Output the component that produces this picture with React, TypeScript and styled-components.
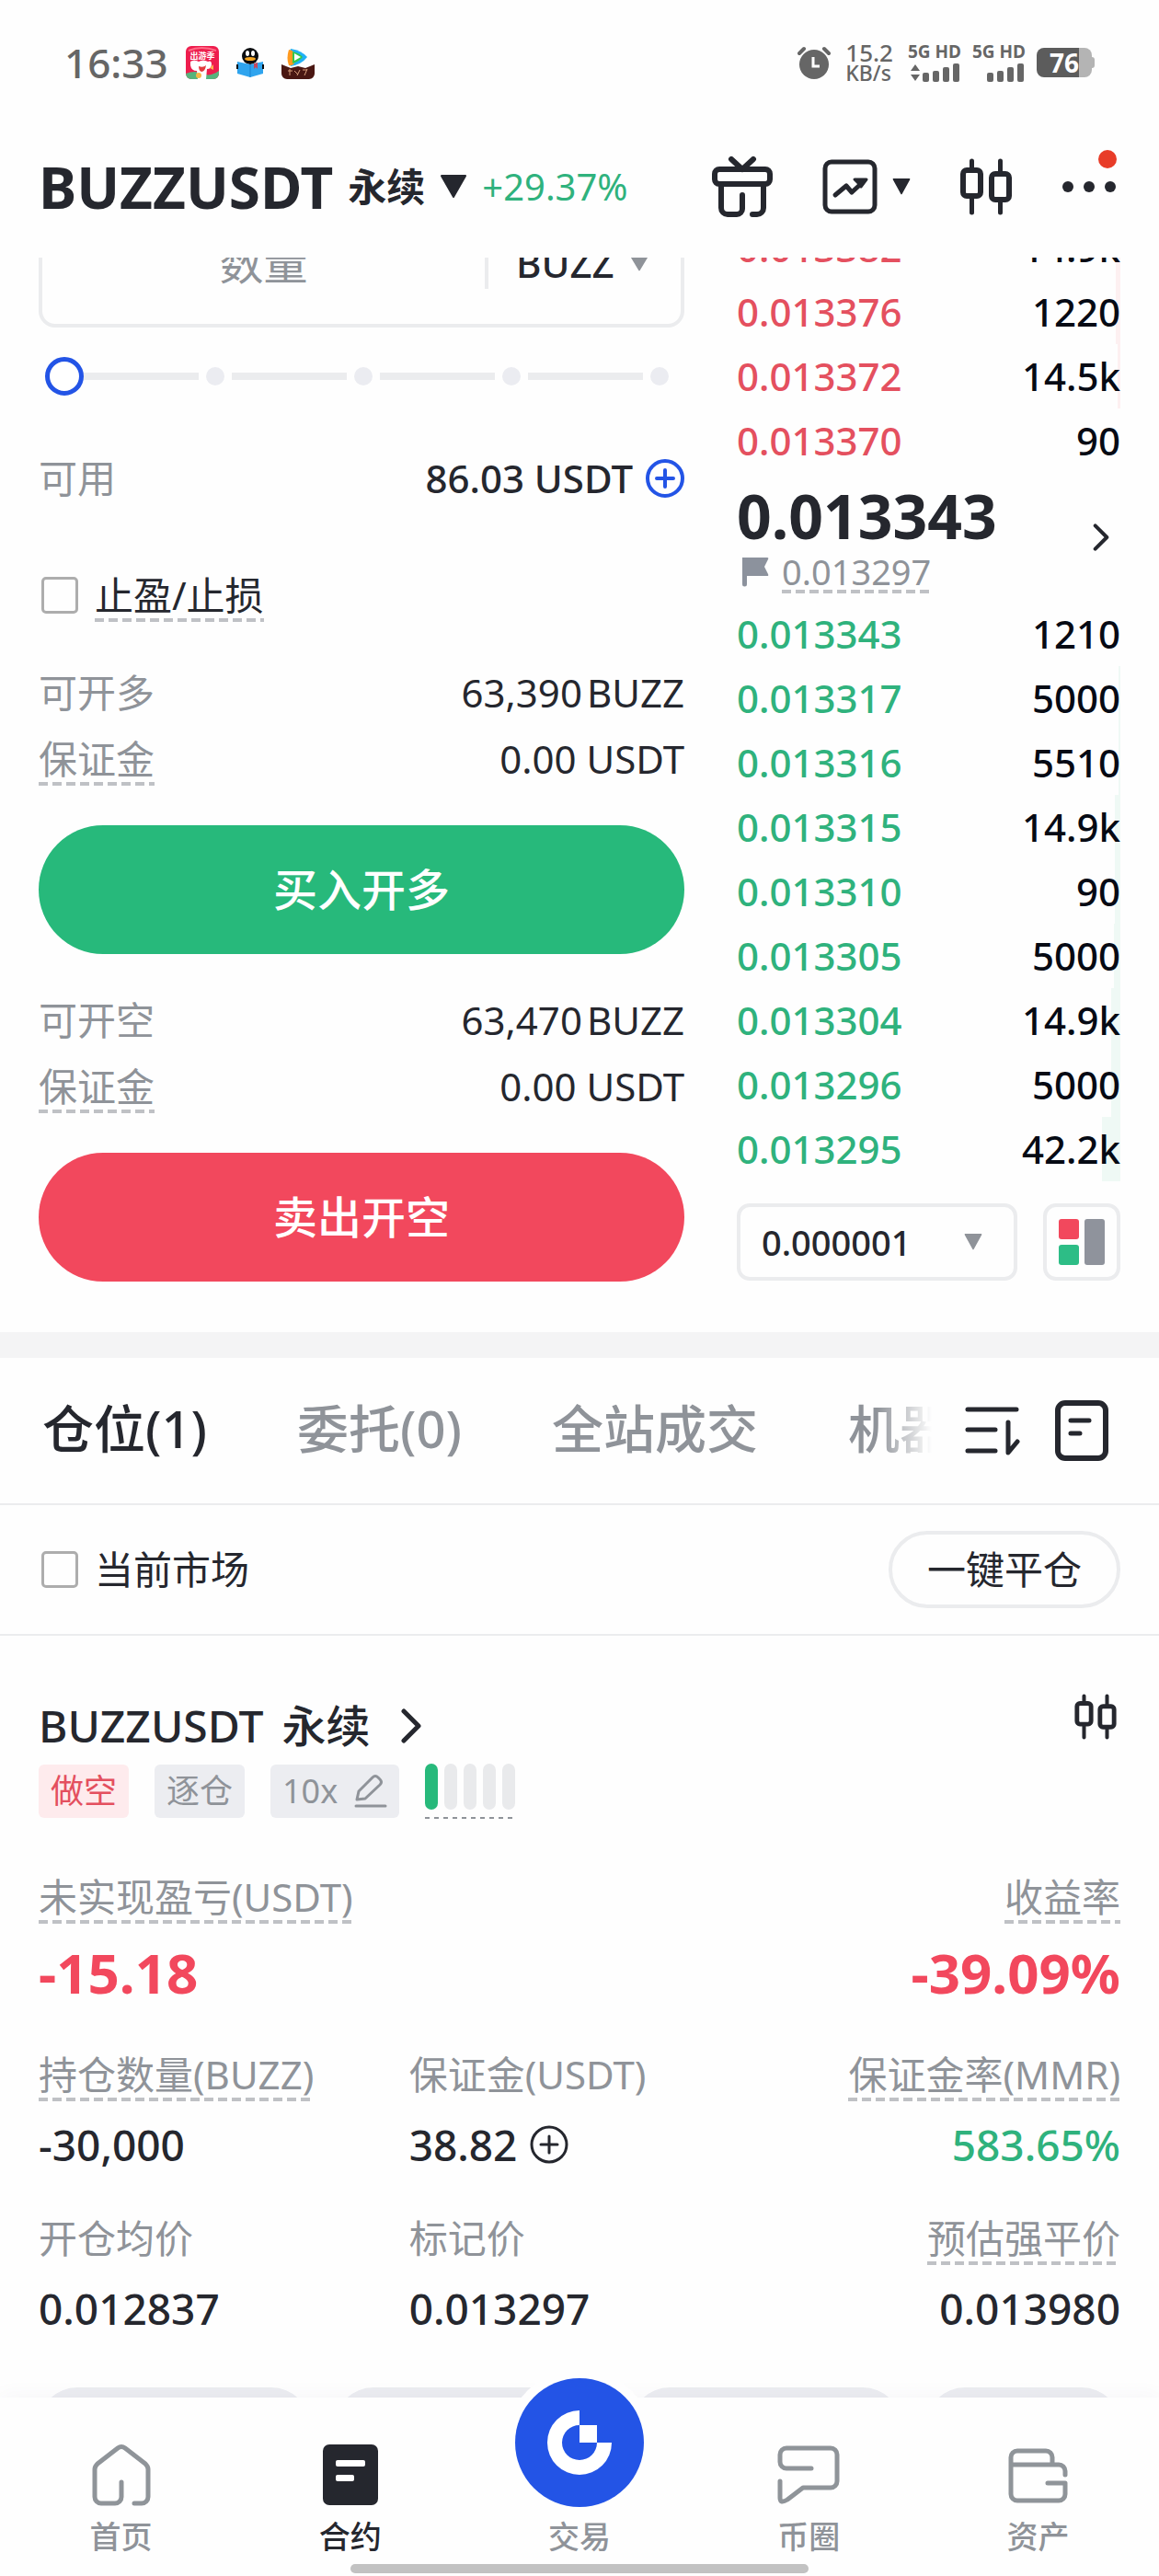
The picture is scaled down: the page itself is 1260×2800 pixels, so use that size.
import React from "react";
import styled, { createGlobalStyle, css } from "styled-components";

const c = {
  ink: "#25272e",
  muted: "#8f9399",
  green: "#27b97b",
  greenText: "#2fb27d",
  red: "#f2485d",
  redText: "#e4505f",
  blue: "#2354e6",
  line: "#ebecee",
  chip: "#ecedf1",
  status: "#666666",
};

const GlobalStyle = createGlobalStyle`
  *, *::before, *::after { box-sizing: border-box; }
  body {
    margin: 0;
    background: #fefefe;
    color: ${c.ink};
    font-family: "Noto Sans", "Noto Sans CJK SC", sans-serif;
    font-size: 42px;
    line-height: 58px;
  }
  button, input, select { font: inherit; color: inherit; margin: 0; }
  button { padding: 0; border: 0; background: none; cursor: pointer; }
  svg { display: block; flex: none; }
`;

const Screen = styled.div`
  display: flex;
  flex-direction: column;
  height: 100vh;
  white-space: nowrap;
`;

/* ---------- status bar ---------- */

const StatusBar = styled.div`
  display: flex;
  align-items: center;
  justify-content: space-between;
  flex: none;
  height: 136px;
  padding: 0 70px;
  color: ${c.status};
`;

const StatusGroup = styled.div<{ $gap: number }>`
  display: flex;
  align-items: center;
  gap: ${(p) => p.$gap}px;
`;

const Clock = styled.time`
  font-size: 44px;
  font-weight: 500;
`;

const NetSpeed = styled.div`
  display: flex;
  flex-direction: column;
  margin: 0 4px;
  font-weight: 500;
`;

const NetValue = styled.span`
  font-size: 26px;
  line-height: 22px;
`;

const NetUnit = styled.span`
  font-size: 23px;
  line-height: 22px;
`;

const Signal = styled.div`
  display: flex;
  flex-direction: column;
  align-items: flex-end;
  gap: 4px;
  font-size: 19px;
  line-height: 18px;
  font-weight: 700;
`;

const Battery = styled.div`
  display: flex;
  align-items: center;
`;

const BatteryBody = styled.div`
  width: 60px;
  height: 32px;
  border-radius: 8px;
  background: linear-gradient(to right, #5c5c5c 76%, #b4b4b4 76%);
  color: #fff;
  font-size: 28px;
  line-height: 32px;
  font-weight: 700;
  text-align: center;
`;

const BatteryTip = styled.div`
  width: 3px;
  height: 12px;
  border-radius: 0 3px 3px 0;
  background: #b4b4b4;
`;

/* ---------- header ---------- */

const Header = styled.header`
  display: flex;
  align-items: center;
  justify-content: space-between;
  flex: none;
  height: 144px;
  padding: 0 46px 10px 42px;
`;

const PairButton = styled.button`
  display: flex;
  align-items: center;
  gap: 16px;
`;

const PairName = styled.span`
  font-size: 62px;
  font-weight: 700;
`;

const PairKind = styled.span`
  font-weight: 700;
`;

const Change = styled.span`
  color: ${c.greenText};
  font-size: 40px;
`;

const HeaderTools = styled.div`
  display: flex;
  align-items: center;
  gap: 54px;
`;

const IconButton = styled.button`
  display: flex;
  align-items: center;
  gap: 16px;
  position: relative;
`;

const RedDot = styled.span`
  position: absolute;
  top: -33px;
  right: 0;
  width: 20px;
  height: 20px;
  border-radius: 50%;
  background: #e83c28;
`;

/* ---------- scrolled content ---------- */

const Scroll = styled.main`
  flex: 1;
  min-height: 0;
  overflow: hidden;
`;

const Trade = styled.section`
  display: grid;
  grid-template-columns: minmax(0, 702fr) minmax(0, 417fr);
  gap: 57px;
  margin-top: -64px;
  padding: 0 42px 55px;
`;

const Form = styled.form`
  display: flex;
  flex-direction: column;
`;

const AmountBox = styled.div`
  display: flex;
  align-items: center;
  height: 140px;
  border: 4px solid ${c.line};
  border-radius: 18px;
`;

const AmountInput = styled.input`
  flex: 1;
  min-width: 0;
  height: 56px;
  border: 0;
  border-right: 4px solid ${c.line};
  outline: 0;
  background: none;
  font-size: 48px;
  text-align: center;
  &::placeholder { color: ${c.muted}; opacity: 1; }
`;

const SelectWrap = styled.div<{ $boxed?: boolean }>`
  display: grid;
  align-items: center;
  & > * { grid-area: 1 / 1; }
  & > svg { justify-self: end; margin-right: 34px; pointer-events: none; }
  ${(p) =>
    p.$boxed &&
    css`
      flex: 1;
      height: 84px;
      border: 4px solid ${c.line};
      border-radius: 14px;
    `}
`;

const Select = styled.select<{ $size: number; $pad: number }>`
  appearance: none;
  width: 100%;
  padding: 0 72px 0 ${(p) => p.$pad}px;
  border: 0;
  outline: 0;
  background: none;
  font-size: ${(p) => p.$size}px;
  font-weight: 500;
`;

const SliderWrap = styled.div`
  display: grid;
  align-items: center;
  margin: 32px 17px 0 7px;
  height: 42px;
  & > * { grid-area: 1 / 1; }
`;

const Rail = styled.div`
  display: flex;
  align-items: center;
  gap: 8px;
  margin-left: 42px;
`;

const RailLine = styled.span`
  flex: 1;
  height: 8px;
  background: ${c.line};
`;

const RailDot = styled.span`
  width: 20px;
  height: 20px;
  border-radius: 50%;
  background: #ebecf1;
`;

const Range = styled.input`
  appearance: none;
  width: 100%;
  height: 42px;
  background: none;
  &::-webkit-slider-thumb {
    appearance: none;
    width: 42px;
    height: 42px;
    border: 5px solid ${c.blue};
    border-radius: 50%;
    background: #fff;
  }
`;

const Row = styled.div<{ $top?: number }>`
  display: flex;
  align-items: center;
  justify-content: space-between;
  height: 72px;
  margin-top: ${(p) => p.$top ?? 0}px;
`;

const dashed = css`
  background: repeating-linear-gradient(to right, #bfc1c5 0 10px, transparent 10px 15px) left bottom / 100% 4px no-repeat;
`;

const Label = styled.span<{ $dashed?: boolean }>`
  color: ${c.muted};
  ${(p) => p.$dashed && dashed}
`;

const Amount = styled.span<{ $strong?: boolean; $gap: number }>`
  display: flex;
  align-items: center;
  gap: ${(p) => p.$gap}px;
  font-weight: ${(p) => (p.$strong ? 500 : 400)};
`;

const CheckLabel = styled.label`
  display: flex;
  align-items: center;
  gap: 18px;
`;

const CheckText = styled.span<{ $dashed?: boolean }>`
  ${(p) => p.$dashed && dashed}
`;

const Checkbox = styled.input`
  appearance: none;
  width: 40px;
  height: 40px;
  margin-left: 3px;
  border: 3px solid #adadad;
  border-radius: 5px;
`;

const OrderButton = styled.button<{ $side: "buy" | "sell" }>`
  height: 140px;
  margin-top: 36px;
  border-radius: 70px;
  background: ${(p) => (p.$side === "buy" ? c.green : c.red)};
  color: #fff;
  font-size: 48px;
  font-weight: 500;
`;

/* ---------- order book ---------- */

const Book = styled.div`
  display: flex;
  flex-direction: column;
  padding-top: 18px;
`;

const BookTable = styled.table`
  width: 100%;
  border-collapse: collapse;
`;

const PriceCell = styled.td<{ $side: "ask" | "bid" }>`
  height: 70px;
  padding: 0;
  color: ${(p) => (p.$side === "ask" ? c.redText : c.greenText)};
  font-weight: 500;
`;

const QtyCell = styled.td<{ $side: "ask" | "bid"; $depth: number }>`
  height: 70px;
  padding: 0;
  color: #060a14;
  font-weight: 500;
  text-align: right;
  background: linear-gradient(
      ${(p) => (p.$side === "ask" ? "#fdf0f1, #fdf0f1" : "#eff9f5, #eff9f5")}
    )
    right / ${(p) => p.$depth}px 100% no-repeat;
`;

const LastPrice = styled.button`
  display: flex;
  align-items: center;
  justify-content: space-between;
  height: 140px;
  padding-right: 12px;
  text-align: left;
`;

const LastValue = styled.strong`
  display: block;
  font-size: 66px;
  line-height: 74px;
  font-weight: 700;
`;

const MarkPrice = styled.span`
  display: flex;
  align-items: center;
  gap: 14px;
  margin-left: 6px;
  color: ${c.muted};
  font-size: 38px;
  line-height: 48px;
`;

const MarkValue = styled.span`
  ${dashed}
`;

const BookTools = styled.div`
  display: flex;
  gap: 28px;
  margin-top: 24px;
`;

const LayoutButton = styled.button`
  display: grid;
  place-items: center;
  width: 84px;
  height: 84px;
  border: 4px solid ${c.line};
  border-radius: 14px;
`;

/* ---------- positions ---------- */

const TabBar = styled.div`
  display: flex;
  align-items: center;
  height: 188px;
  padding: 0 55px 0 46px;
  border-top: 28px solid #f4f4f5;
  border-bottom: 2px solid ${c.line};
`;

const Tabs = styled.div`
  display: flex;
  flex: 1;
  min-width: 0;
  gap: 98px;
  margin-right: 36px;
  padding-bottom: 6px;
  overflow: hidden;
  mask-image: linear-gradient(to right, #000 calc(100% - 60px), transparent);
`;

const Tab = styled.button<{ $active?: boolean }>`
  flex: none;
  font-size: 56px;
  line-height: 80px;
  font-weight: 500;
  color: ${(p) => (p.$active ? c.ink : c.muted)};
`;

const TabTools = styled.div`
  display: flex;
  align-items: center;
  gap: 38px;
`;

const FilterBar = styled.div`
  display: flex;
  align-items: center;
  justify-content: space-between;
  height: 142px;
  padding: 0 42px;
  border-bottom: 2px solid ${c.line};
`;

const CloseAll = styled.button`
  height: 84px;
  padding: 0 38px;
  border: 4px solid ${c.line};
  border-radius: 42px;
`;

const Position = styled.article`
  padding: 63px 42px 0;
`;

const PositionHead = styled.div`
  display: flex;
  align-items: flex-start;
  justify-content: space-between;
  padding-right: 4px;
`;

const PositionName = styled.button`
  display: flex;
  align-items: center;
  gap: 20px;
  height: 70px;
  font-size: 48px;
  font-weight: 500;
`;

const NameArrow = styled.span`
  margin-left: 14px;
`;

const Badges = styled.div`
  display: flex;
  align-items: center;
  gap: 28px;
  margin-top: 6px;
`;

const Badge = styled.span<{ $red?: boolean }>`
  display: flex;
  align-items: center;
  gap: 18px;
  height: 58px;
  padding: 0 13px;
  border-radius: 6px;
  background: ${(p) => (p.$red ? "#feebed" : c.chip)};
  color: ${(p) => (p.$red ? c.redText : c.muted)};
  font-size: 36px;
`;

const Risk = styled.div`
  display: flex;
  gap: 7px;
  height: 60px;
  padding-bottom: 10px;
  background: repeating-linear-gradient(to right, #8f9399 0 5px, transparent 5px 10px) left bottom / 100% 2px no-repeat;
`;

const RiskBar = styled.span<{ $on: boolean }>`
  width: 14px;
  border-radius: 7px;
  background: ${(p) => (p.$on ? c.green : "#e9eaec")};
`;

const Stats = styled.dl<{ $cols: number; $top: number }>`
  display: grid;
  grid-template-columns: repeat(${(p) => p.$cols}, minmax(0, 1fr));
  gap: 32px;
  margin: ${(p) => p.$top}px 0 0;
`;

const Stat = styled.div<{ $end?: boolean }>`
  display: flex;
  flex-direction: column;
  align-items: ${(p) => (p.$end ? "flex-end" : "flex-start")};
`;

const StatName = styled.dt<{ $dashed?: boolean }>`
  color: ${c.muted};
  ${(p) => p.$dashed && dashed}
`;

const StatValue = styled.dd<{ $tone?: "red" | "green"; $big?: boolean }>`
  display: flex;
  align-items: center;
  gap: 14px;
  margin: ${(p) => (p.$big ? 18 : 12)}px 0 0;
  font-size: ${(p) => (p.$big ? 60 : 46)}px;
  line-height: 70px;
  font-weight: ${(p) => (p.$big ? 700 : 500)};
  color: ${(p) => (p.$tone === "red" ? c.red : p.$tone === "green" ? c.greenText : c.ink)};
`;

const Actions = styled.div`
  display: flex;
  gap: 27px;
  margin-top: 51px;
`;

const ActionPill = styled.button<{ $grow: number }>`
  flex: ${(p) => p.$grow} 1 0;
  height: 84px;
  border-radius: 42px;
  background: ${c.chip};
`;

/* ---------- bottom navigation ---------- */

const BottomNav = styled.nav`
  position: relative;
  flex: none;
  height: 194px;
  padding: 0 7px;
  background: #fefefe;
  box-shadow: 0 -4px 20px rgba(30, 40, 80, 0.03);
`;

const NavList = styled.div`
  display: grid;
  grid-template-columns: repeat(5, 1fr);
  height: 181px;
`;

const NavItem = styled.a<{ $active?: boolean }>`
  display: flex;
  flex-direction: column;
  align-items: center;
  justify-content: flex-end;
  gap: 10px;
  padding-bottom: 7px;
  color: ${(p) => (p.$active ? c.ink : c.muted)};
  font-size: 34px;
  line-height: 46px;
  font-weight: 500;
  text-decoration: none;
`;

const TradeDisc = styled.span`
  position: absolute;
  top: -31px;
  left: 50%;
  margin-left: -80px;
  width: 160px;
  height: 160px;
  border: 10px solid #fefefe;
  border-radius: 50%;
  background: #fefefe;
`;

const HomeIndicator = styled.div`
  width: 40%;
  height: 10px;
  margin: 0 auto;
  border-radius: 5px;
  background: #c2c2c2;
`;

/* ---------- drawings ---------- */

const Triangle = ({ w, h, color }: { w: number; h: number; color: string }) => (
  <svg width={w} height={h} viewBox="0 0 30 24" preserveAspectRatio="none" aria-hidden="true">
    <path d="M2 1h26L15 22z" fill={color} stroke={color} strokeWidth="2" strokeLinejoin="round" />
  </svg>
);

const Chevron = ({ w, h }: { w: number; h: number }) => (
  <svg width={w} height={h} viewBox="0 0 22 38" fill="none" aria-hidden="true">
    <path d="M3 3l16 16L3 35" stroke={c.ink} strokeWidth="5" strokeLinecap="round" strokeLinejoin="round" />
  </svg>
);

const PlusCircle = ({ color, w }: { color: string; w: number }) => (
  <svg width="42" height="42" viewBox="0 0 42 42" fill="none" stroke={color} strokeWidth={w} strokeLinecap="round" aria-hidden="true">
    <circle cx="21" cy="21" r="19" />
    <path d="M21 12v18M12 21h18" />
  </svg>
);

const Candles = ({ w, h }: { w: number; h: number }) => (
  <svg width={w} height={h} viewBox="0 0 56 62" fill="none" stroke={c.ink} strokeWidth="6" strokeLinecap="round" aria-hidden="true">
    <rect x="3" y="13" width="19" height="28" rx="4" />
    <rect x="34" y="17" width="19" height="28" rx="4" />
    <path d="M12.500 3v9M12.500 42v17M43.500 3v13M43.500 46v13" strokeWidth="5" />
  </svg>
);

const GiftIcon = () => (
  <svg width="66" height="66" viewBox="0 0 66 66" fill="none" stroke={c.ink} strokeWidth="6" strokeLinecap="round" strokeLinejoin="round" aria-hidden="true">
    <path d="M21 3l12 11L45 3" />
    <rect x="3" y="14" width="60" height="16" rx="5" />
    <path d="M10 31v25a7 7 0 0 0 7 7h10a6 6 0 0 0 6-6V42M56 31v25a7 7 0 0 1-7 7h-5" />
  </svg>
);

const ChartBoxIcon = () => (
  <svg width="60" height="60" viewBox="0 0 60 60" fill="none" stroke={c.ink} strokeWidth="5" strokeLinecap="round" strokeLinejoin="round" aria-hidden="true">
    <rect x="3" y="3" width="54" height="54" rx="7" />
    <path d="M14 39l12-10 6 7 12-11" />
    <path d="M35 22h13l-6 8-3-4z" fill={c.ink} strokeWidth="3" />
  </svg>
);

const MoreIcon = () => (
  <svg width="60" height="14" viewBox="0 0 60 14" fill={c.ink} aria-hidden="true">
    <circle cx="7" cy="7" r="6" />
    <circle cx="30" cy="7" r="6" />
    <circle cx="53" cy="7" r="6" />
  </svg>
);

const ShopAppIcon = () => (
  <svg width="36" height="36" viewBox="0 0 36 36" aria-hidden="true">
    <defs>
      <clipPath id="shop"><rect width="36" height="36" rx="6" /></clipPath>
    </defs>
    <g clipPath="url(#shop)">
      <rect width="36" height="36" fill="#ee1d4d" />
      <path d="M3 5q14-6 30 0" stroke="#ff6a86" strokeWidth="2" fill="none" />
      <path d="M0 30q10-4 18 0t18-3v9H0z" fill="#57b37c" />
      <path d="M5 17q4-3 9 0 5-3 10 0 4-2 4 3 0 5-5 5l-1 11h-9l-1-9q-6 0-7-6z" fill="#fff" />
      <path d="M14 22q5 2 8-1-1 7-5 7-3-1-3-6z" fill="#e23b3f" />
      <path d="M26 24l4-4v6z" fill="#ffb04d" />
      <circle cx="14" cy="32" r="3" fill="#f7b844" />
      <text x="18" y="14" fontSize="9" fontWeight="700" textAnchor="middle" fill="#fff">出游季</text>
    </g>
  </svg>
);

const ReaderAppIcon = () => (
  <svg width="30" height="34" viewBox="0 0 30 34" aria-hidden="true">
    <ellipse cx="15" cy="10" rx="9" ry="9" fill="#0b0d10" />
    <ellipse cx="12" cy="7" rx="2" ry="3" fill="#fff" />
    <ellipse cx="18" cy="7" rx="2" ry="3" fill="#fff" />
    <ellipse cx="15" cy="13" rx="6" ry="2" fill="#f5a623" />
    <path d="M1 16l14 3 14-3v13l-14 4-14-4z" fill="#2fa4ee" />
    <path d="M15 19v14" stroke="#1c82cf" strokeWidth="1" />
    <path d="M19 18l4-1v7l-2-2-2 2z" fill="#c2485f" />
    <path d="M0 19h2v5H0zM28 19h2v5h-2z" fill="#0b0d10" />
  </svg>
);

const VideoAppIcon = () => (
  <svg width="36" height="36" viewBox="0 0 36 36" aria-hidden="true">
    <path d="M10 3q12 2 18 9-6 8-18 10-4-10 0-19z" fill="#1fb0f5" />
    <path d="M8 4q3 0 6 3v12q-3 3-6 2-3-8 0-17z" fill="#ff9a1f" />
    <path d="M12 6q8 2 11 6-4 5-11 7z" fill="#34c749" />
    <path d="M14 8l7 4-7 4z" fill="#fff" />
    <path d="M0 20l10 4 8-2 8 2 10-4v10a6 6 0 0 1-6 6H6a6 6 0 0 1-6-6z" fill="#4a1712" />
    <path d="M7 27h5M9 25v7M14 27l4 4M20 26l-3 6M23 26h5M28 25l-3 7" stroke="#d9a07c" strokeWidth="1" />
  </svg>
);

const AlarmIcon = () => (
  <svg width="36" height="36" viewBox="0 0 36 36" aria-hidden="true">
    <circle cx="18" cy="20" r="16" fill={c.status} />
    <path d="M2 8l5-5M34 8l-5-5" stroke={c.status} strokeWidth="4" strokeLinecap="round" />
    <path d="M17 12v10h7" stroke="#fff" strokeWidth="3" fill="none" />
  </svg>
);

const Bars = ({ arrows }: { arrows?: boolean }) => (
  <svg width="56" height="20" viewBox="0 0 56 20" fill={c.status} aria-hidden="true">
    {arrows && <path d="M6 1l5 7H1zM6 19l5-7H1z" />}
    <rect x="14" y="10" width="7" height="10" rx="2" />
    <rect x="25" y="8" width="7" height="12" rx="2" />
    <rect x="36" y="4" width="7" height="16" rx="2" />
    <rect x="47" y="0" width="7" height="20" rx="2" />
  </svg>
);

const FlagIcon = () => (
  <svg width="29" height="33" viewBox="0 0 29 33" aria-hidden="true">
    <path d="M0 1h27q2 0 1 2l-4 8 4 8q1 2-1 2H5v9a2 2 0 0 1-5 0z" fill="#8c929d" />
  </svg>
);

const BookLayoutIcon = () => (
  <svg width="50" height="50" viewBox="0 0 50 50" aria-hidden="true">
    <rect width="22" height="22" rx="3" fill={c.red} />
    <rect y="28" width="22" height="22" rx="3" fill="#2dbd86" />
    <rect x="28" width="22" height="50" rx="3" fill="#8f939c" />
  </svg>
);

const SortIcon = () => (
  <svg width="60" height="54" viewBox="0 0 60 54" fill="none" stroke={c.ink} strokeWidth="5" strokeLinecap="round" strokeLinejoin="round" aria-hidden="true">
    <path d="M3 4h53M3 26h30M3 49h30M47 18v33l10-12" />
  </svg>
);

const RecordIcon = () => (
  <svg width="58" height="66" viewBox="0 0 58 66" fill="none" stroke={c.ink} strokeWidth="6" strokeLinecap="round" aria-hidden="true">
    <rect x="3" y="3" width="52" height="60" rx="8" />
    <path d="M17 22h20M17 36h10" strokeWidth="5" />
  </svg>
);

const PencilIcon = () => (
  <svg width="36" height="36" viewBox="0 0 36 36" fill="none" stroke={c.muted} strokeWidth="3" strokeLinecap="round" strokeLinejoin="round" aria-hidden="true">
    <path d="M3 27l2-9L20 3q3-3 6 0l2 2q3 3 0 6L12 26zM2 34h32" />
  </svg>
);

const navStroke = { fill: "none", stroke: "#8f9499", strokeWidth: 5, strokeLinecap: "round", strokeLinejoin: "round" } as const;

const HomeIcon = () => (
  <svg width="66" height="68" viewBox="0 0 66 68" {...navStroke} aria-hidden="true">
    <path d="M33 42v16a7 7 0 0 1-7 7H11a7 7 0 0 1-7-7V28q0-3 3-6L29 5q4-3 8 0l22 17q3 3 3 6v30a7 7 0 0 1-7 7h-8" />
  </svg>
);

const FuturesIcon = () => (
  <svg width="60" height="68" viewBox="0 0 60 68" aria-hidden="true">
    <rect y="1" width="60" height="66" rx="7" fill={c.ink} />
    <rect x="14" y="18" width="32" height="7" rx="2" fill="#fff" />
    <rect x="14" y="34" width="20" height="7" rx="2" fill="#fff" />
  </svg>
);

const CircleIcon = () => (
  <svg width="70" height="68" viewBox="0 0 70 68" {...navStroke} aria-hidden="true">
    <path d="M38 27H11a7 7 0 0 1-7-7V12a7 7 0 0 1 7-7h48a7 7 0 0 1 7 7v29a7 7 0 0 1-7 7H29L12 61q-8 5-8-2V41" />
  </svg>
);

const WalletIcon = () => (
  <svg width="66" height="68" viewBox="0 0 66 68" {...navStroke} aria-hidden="true">
    <path d="M4 23v32a7 7 0 0 0 7 7h45a7 7 0 0 0 7-7V43H44M63 34v-4a7 7 0 0 0-7-7H4v-8a7 7 0 0 1 7-7h31a7 7 0 0 1 7 7v8" />
  </svg>
);

const TradeLogo = () => (
  <svg width="140" height="140" viewBox="0 0 140 140" aria-hidden="true">
    <circle cx="70" cy="70" r="70" fill={c.blue} />
    <path d="M70 35a35 35 0 1 0 35 35H89a19 19 0 1 1-19-19z" fill="#fff" />
    <rect x="70" y="51" width="19" height="19" fill="#fff" />
  </svg>
);

/* ---------- data ---------- */

type Level = { price: string; qty: string; depth: number };

const asks: Level[] = [
  { price: "0.013382", qty: "14.9k", depth: 5 },
  { price: "0.013376", qty: "1220", depth: 5 },
  { price: "0.013372", qty: "14.5k", depth: 3 },
  { price: "0.013370", qty: "90", depth: 0 },
];

const bids: Level[] = [
  { price: "0.013343", qty: "1210", depth: 0 },
  { price: "0.013317", qty: "5000", depth: 2 },
  { price: "0.013316", qty: "5510", depth: 2 },
  { price: "0.013315", qty: "14.9k", depth: 6 },
  { price: "0.013310", qty: "90", depth: 6 },
  { price: "0.013305", qty: "5000", depth: 7 },
  { price: "0.013304", qty: "14.9k", depth: 10 },
  { price: "0.013296", qty: "5000", depth: 10 },
  { price: "0.013295", qty: "42.2k", depth: 20 },
];

const Levels = ({ side, rows }: { side: "ask" | "bid"; rows: Level[] }) => (
  <BookTable aria-label={side === "ask" ? "卖盘" : "买盘"}>
    <tbody>
      {rows.map((r) => (
        <tr key={r.price}>
          <PriceCell $side={side}>{r.price}</PriceCell>
          <QtyCell $side={side} $depth={r.depth}>{r.qty}</QtyCell>
        </tr>
      ))}
    </tbody>
  </BookTable>
);

const OpenSide = ({ label, qty, side, action }: { label: string; qty: string; side: "buy" | "sell"; action: string }) => (
  <>
    <Row $top={side === "buy" ? 34 : 36}>
      <Label>{label}</Label>
      <Amount $gap={5}><span>{qty}</span><span>BUZZ</span></Amount>
    </Row>
    <Row>
      <Label $dashed>保证金</Label>
      <Amount $gap={11}><span>0.00</span><span>USDT</span></Amount>
    </Row>
    <OrderButton type="button" $side={side}>{action}</OrderButton>
  </>
);

export default function App() {
  return (
    <Screen>
      <GlobalStyle />
      <StatusBar>
        <StatusGroup $gap={19}>
          <Clock>16:33</Clock>
          <ShopAppIcon />
          <ReaderAppIcon />
          <VideoAppIcon />
        </StatusGroup>
        <StatusGroup $gap={12}>
          <AlarmIcon />
          <NetSpeed>
            <NetValue>15.2</NetValue>
            <NetUnit>KB/s</NetUnit>
          </NetSpeed>
          <Signal>5G HD<Bars arrows /></Signal>
          <Signal>5G HD<Bars /></Signal>
          <Battery>
            <BatteryBody>76</BatteryBody>
            <BatteryTip />
          </Battery>
        </StatusGroup>
      </StatusBar>

      <Header>
        <PairButton>
          <PairName>BUZZUSDT</PairName>
          <PairKind>永续</PairKind>
          <Triangle w={30} h={26} color={c.ink} />
          <Change>+29.37%</Change>
        </PairButton>
        <HeaderTools>
          <IconButton aria-label="礼物"><GiftIcon /></IconButton>
          <IconButton aria-label="图表"><ChartBoxIcon /><Triangle w={20} h={18} color={c.ink} /></IconButton>
          <IconButton aria-label="K线"><Candles w={56} h={62} /></IconButton>
          <IconButton aria-label="更多"><MoreIcon /><RedDot /></IconButton>
        </HeaderTools>
      </Header>

      <Scroll>
        <Trade>
          <Form>
            <AmountBox>
              <AmountInput aria-label="数量" placeholder="数量" />
              <SelectWrap>
                <Select aria-label="单位" $size={42} $pad={30} defaultValue="BUZZ">
                  <option>BUZZ</option>
                </Select>
                <Triangle w={22} h={18} color={c.muted} />
              </SelectWrap>
            </AmountBox>

            <SliderWrap>
              <Rail aria-hidden="true">
                {[25, 50, 75, 100].map((v) => (
                  <React.Fragment key={v}><RailLine /><RailDot /></React.Fragment>
                ))}
              </Rail>
              <Range type="range" min={0} max={100} defaultValue={0} aria-label="仓位比例" />
            </SliderWrap>

            <Row $top={54}>
              <Label>可用</Label>
              <Amount $strong $gap={14}>86.03 USDT<IconButton type="button" aria-label="充值"><PlusCircle color={c.blue} w={4} /></IconButton></Amount>
            </Row>
            <Row $top={55}>
              <CheckLabel>
                <Checkbox type="checkbox" />
                <CheckText $dashed>止盈/止损</CheckText>
              </CheckLabel>
            </Row>

            <OpenSide label="可开多" qty="63,390" side="buy" action="买入开多" />
            <OpenSide label="可开空" qty="63,470" side="sell" action="卖出开空" />
          </Form>

          <Book>
            <Levels side="ask" rows={asks} />
            <LastPrice>
              <span>
                <LastValue>0.013343</LastValue>
                <MarkPrice><FlagIcon /><MarkValue>0.013297</MarkValue></MarkPrice>
              </span>
              <Chevron w={18} h={30} />
            </LastPrice>
            <Levels side="bid" rows={bids} />
            <BookTools>
              <SelectWrap $boxed>
                <Select aria-label="价格精度" $size={38} $pad={23} defaultValue="0.000001">
                  <option>0.000001</option>
                </Select>
                <Triangle w={20} h={18} color={c.muted} />
              </SelectWrap>
              <LayoutButton aria-label="盘口样式"><BookLayoutIcon /></LayoutButton>
            </BookTools>
          </Book>
        </Trade>

        <TabBar>
          <Tabs role="tablist">
            <Tab role="tab" aria-selected="true" $active>仓位(1)</Tab>
            <Tab role="tab">委托(0)</Tab>
            <Tab role="tab">全站成交</Tab>
            <Tab role="tab">机器人</Tab>
          </Tabs>
          <TabTools>
            <IconButton aria-label="排序"><SortIcon /></IconButton>
            <IconButton aria-label="记录"><RecordIcon /></IconButton>
          </TabTools>
        </TabBar>

        <FilterBar>
          <CheckLabel>
            <Checkbox type="checkbox" />
            <CheckText>当前市场</CheckText>
          </CheckLabel>
          <CloseAll>一键平仓</CloseAll>
        </FilterBar>

        <Position>
          <PositionHead>
            <PositionName>
              <span>BUZZUSDT</span>
              <span>永续</span>
              <NameArrow><Chevron w={22} h={38} /></NameArrow>
            </PositionName>
            <IconButton aria-label="K线"><Candles w={46} h={50} /></IconButton>
          </PositionHead>
          <Badges>
            <Badge $red>做空</Badge>
            <Badge>逐仓</Badge>
            <Badge>10x<PencilIcon /></Badge>
            <Risk aria-label="风险等级">
              {[0, 1, 2, 3, 4].map((i) => <RiskBar key={i} $on={i === 0} />)}
            </Risk>
          </Badges>

          <Stats $cols={2} $top={56}>
            <Stat>
              <StatName $dashed>未实现盈亏(USDT)</StatName>
              <StatValue $big $tone="red">-15.18</StatValue>
            </Stat>
            <Stat $end>
              <StatName $dashed>收益率</StatName>
              <StatValue $big $tone="red">-39.09%</StatValue>
            </Stat>
          </Stats>
          <Stats $cols={3} $top={47}>
            <Stat>
              <StatName $dashed>持仓数量(BUZZ)</StatName>
              <StatValue>-30,000</StatValue>
            </Stat>
            <Stat>
              <StatName>保证金(USDT)</StatName>
              <StatValue>38.82<IconButton aria-label="调整保证金"><PlusCircle color={c.ink} w={3} /></IconButton></StatValue>
            </Stat>
            <Stat $end>
              <StatName $dashed>保证金率(MMR)</StatName>
              <StatValue $tone="green">583.65%</StatValue>
            </Stat>
          </Stats>
          <Stats $cols={3} $top={38}>
            <Stat>
              <StatName>开仓均价</StatName>
              <StatValue>0.012837</StatValue>
            </Stat>
            <Stat>
              <StatName>标记价</StatName>
              <StatValue>0.013297</StatValue>
            </Stat>
            <Stat $end>
              <StatName $dashed>预估强平价</StatName>
              <StatValue>0.013980</StatValue>
            </Stat>
          </Stats>
          <Actions>
            <ActionPill $grow={7} aria-label="杠杆" />
            <ActionPill $grow={7} aria-label="止盈止损" />
            <ActionPill $grow={7} aria-label="平仓" />
            <ActionPill $grow={5} aria-label="分享" />
          </Actions>
        </Position>
      </Scroll>

      <BottomNav>
        <TradeDisc><TradeLogo /></TradeDisc>
        <NavList>
          <NavItem href="#home"><HomeIcon />首页</NavItem>
          <NavItem href="#futures" $active aria-current="page"><FuturesIcon />合约</NavItem>
          <NavItem href="#trade">交易</NavItem>
          <NavItem href="#circle"><CircleIcon />币圈</NavItem>
          <NavItem href="#assets"><WalletIcon />资产</NavItem>
        </NavList>
        <HomeIndicator />
      </BottomNav>
    </Screen>
  );
}
